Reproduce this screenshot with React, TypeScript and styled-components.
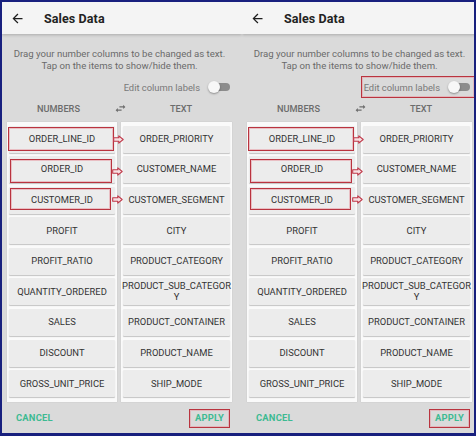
import React from 'react';
import styled, { createGlobalStyle } from 'styled-components';
import { MdArrowBack, MdSwapHoriz } from 'react-icons/md';

const GlobalStyle = createGlobalStyle`
  html, body {
    margin: 0;
    padding: 0;
    background: #ffffff;
  }
  body {
    font-family: Roboto, "Noto Sans", Arial, sans-serif;
  }
`;

const Frame = styled.div`
  width: 476px;
  height: 436px;
  box-sizing: border-box;
  border: 2px solid #18207e;
  border-bottom-width: 3px;
  display: flex;
  overflow: hidden;
  background: #dadada;
`;

const StylesPanel = styled.div<{ $width: number }>`
  position: relative;
  flex: 0 0 ${({ $width }) => $width}px;
  width: ${({ $width }) => $width}px;
  height: 100%;
  overflow: hidden;
  background: #dadada;
  display: flex;
  flex-direction: column;
`;

const Inner = styled.div`
  width: 240px;
  height: 100%;
  display: flex;
  flex-direction: column;
`;

const Header = styled.div`
  height: 32px;
  flex: 0 0 32px;
  display: flex;
  align-items: center;
  background: #f4f4f4;
  box-shadow: 0 1px 3px rgba(0, 0, 0, 0.22);
  position: relative;
  z-index: 1;

  svg {
    margin-left: 8px;
    color: #1e1e1e;
  }
  h1 {
    margin: 0 0 0 19px;
    font-size: 12.5px;
    font-weight: 700;
    color: #222;
    letter-spacing: 0.1px;
  }
`;

const Content = styled.div`
  margin: 0 10px 0 5px;
  width: 225px;
  display: flex;
  flex-direction: column;
`;

const Hint = styled.p`
  margin: 14px 0 0;
  font-size: 9.6px;
  line-height: 12px;
  color: #6a6a6a;
  text-align: center;
`;

const EditRow = styled.div`
  margin-top: 7px;
  height: 16px;
  display: flex;
  align-items: center;
  justify-content: flex-end;
  gap: 8px;
  padding-right: 2px;
  font-size: 9.4px;
  color: #787878;
`;

const Toggle = styled.span`
  position: relative;
  width: 22px;
  height: 12px;
  display: inline-block;

  &::before {
    content: '';
    position: absolute;
    left: 4px;
    right: 0;
    top: 2px;
    height: 8px;
    border-radius: 4px;
    background: #8c8c8c;
  }
  &::after {
    content: '';
    position: absolute;
    left: 0;
    top: 0;
    width: 12px;
    height: 12px;
    border-radius: 50%;
    background: #f7f7f7;
    box-shadow: 0 1px 2px rgba(0, 0, 0, 0.35);
  }
`;

const Labels = styled.div`
  margin-top: 6px;
  height: 14px;
  display: grid;
  grid-template-columns: 103px 20px 1fr;
  align-items: center;
  text-align: center;
  font-size: 9.2px;
  font-weight: 500;
  color: #6c6c6c;

  svg {
    justify-self: center;
    color: #6c6c6c;
  }
`;

const Columns = styled.div`
  margin-top: 7px;
  display: grid;
  grid-template-columns: 110px 111px;
  gap: 4px;
  height: 280px;
`;

const Column = styled.div`
  background: #fafafa;
  padding: 3.5px 2px 0;
  display: flex;
  flex-direction: column;
  gap: 3.6px;
  box-shadow: 0 0 1px rgba(0, 0, 0, 0.15);
`;

const Item = styled.div`
  height: 27px;
  flex: 0 0 27px;
  display: flex;
  align-items: center;
  justify-content: center;
  background: #ececec;
  box-shadow: 0 1px 1px rgba(0, 0, 0, 0.22);
  border-radius: 1px;
  font-size: 9.4px;
  line-height: 10.5px;
  color: #333;
  text-align: center;
  white-space: pre-line;
`;

const Footer = styled.div`
  height: 32px;
  display: flex;
  align-items: center;
  justify-content: space-between;
  padding: 0 18px 0 14px;
  font-size: 9.4px;
  font-weight: 700;
  color: #3dba92;
  letter-spacing: 0.2px;
`;

const Mark = styled.div`
  position: absolute;
  box-sizing: border-box;
  border: 1.5px solid #b9343f;
  box-shadow: inset 0 0 0 1px rgba(232, 160, 168, 0.6);
  pointer-events: none;
  z-index: 2;
`;

const Pointer = styled.svg`
  position: absolute;
  width: 11px;
  height: 9px;
  z-index: 2;
`;

const numbers = [
  'ORDER_LINE_ID',
  'ORDER_ID',
  'CUSTOMER_ID',
  'PROFIT',
  'PROFIT_RATIO',
  'QUANTITY_ORDERED',
  'SALES',
  'DISCOUNT',
  'GROSS_UNIT_PRICE',
];

const texts = [
  'ORDER_PRIORITY',
  'CUSTOMER_NAME',
  'CUSTOMER_SEGMENT',
  'CITY',
  'PRODUCT_CATEGORY',
  'PRODUCT_SUB_CATEGOR\nY',
  'PRODUCT_CONTAINER',
  'PRODUCT_NAME',
  'SHIP_MODE',
];

// annotation boxes drawn over the screenshot, panel coordinates
const boxes = [
  { left: 6, top: 125, width: 106, height: 24 },
  { left: 8, top: 157, width: 102, height: 24 },
  { left: 8, top: 186, width: 101, height: 22 },
];

const arrows = [
  { left: 111, top: 133 },
  { left: 110, top: 165 },
  { left: 110, top: 193 },
];

const PointerArrow = ({ left, top }: { left: number; top: number }) => (
  <Pointer viewBox="0 0 11 9" style={{ left, top }}>
    <path
      d="M0.7 2.8 H5.8 V0.8 L10.2 4.5 L5.8 8.2 V6.2 H0.7 Z"
      fill="#f6dfe1"
      stroke="#c0394a"
      strokeWidth="1.1"
      strokeLinejoin="round"
    />
  </Pointer>
);

const Panel = ({ width, editMarked }: { width: number; editMarked?: boolean }) => {
  return (
    <StylesPanel $width={width}>
      <Inner>
        <Header>
          <MdArrowBack size={15} />
          <h1>Sales Data</h1>
        </Header>
        <Content>
          <Hint>
            Drag your number columns to be changed as text.
            <br />
            Tap on the items to show/hide them.
          </Hint>
          <EditRow>
            <span>Edit column labels</span>
            <Toggle />
          </EditRow>
          <Labels>
            <span>NUMBERS</span>
            <MdSwapHoriz size={13} />
            <span>TEXT</span>
          </Labels>
          <Columns>
            <Column>
              {numbers.map((n) => (
                <Item key={n}>{n}</Item>
              ))}
            </Column>
            <Column>
              {texts.map((t) => (
                <Item key={t}>{t}</Item>
              ))}
            </Column>
          </Columns>
        </Content>
        <Footer>
          <span>CANCEL</span>
          <span>APPLY</span>
        </Footer>
      </Inner>
      {boxes.map((b, i) => (
        <Mark key={i} style={b} />
      ))}
      {arrows.map((a, i) => (
        <PointerArrow key={i} {...a} />
      ))}
      <Mark style={{ left: 187, top: 407, width: 41, height: 19 }} />
      {editMarked ? <Mark style={{ left: 119, top: 74, width: 114, height: 22 }} /> : null}
    </StylesPanel>
  );
};

const App = () => {
  return (
    <>
      <GlobalStyle />
      <Frame>
        <Panel width={240} />
        <Panel width={232} editMarked />
      </Frame>
    </>
  );
};

export default App;
